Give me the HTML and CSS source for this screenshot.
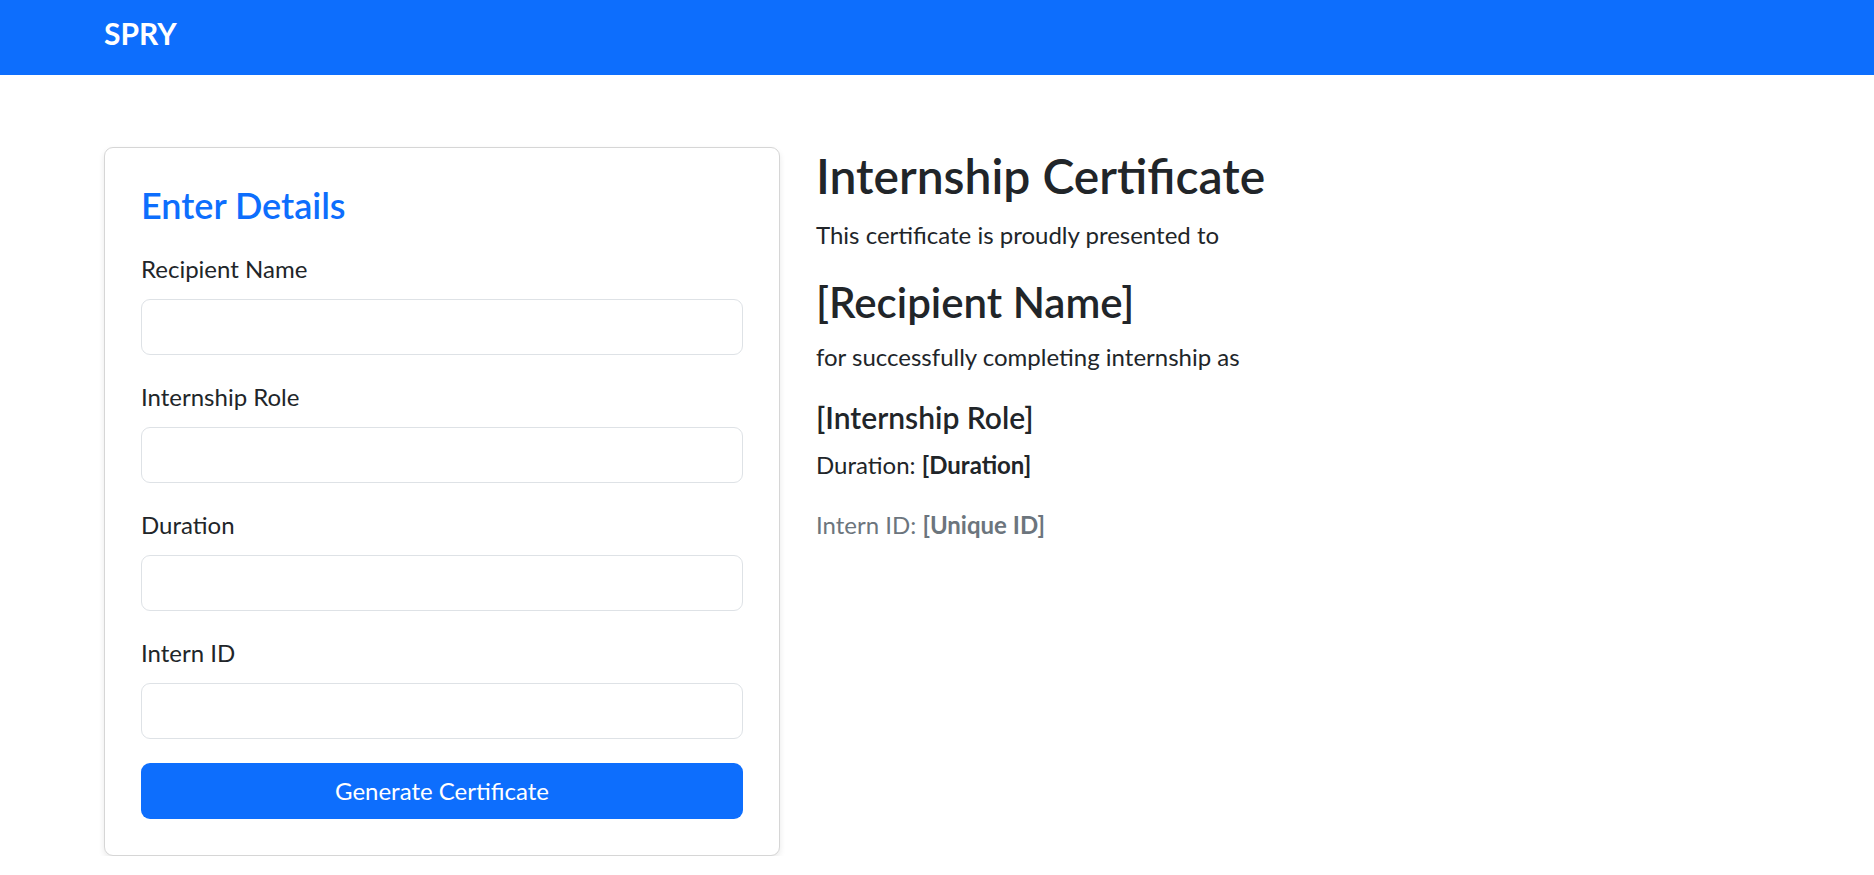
FILE: index.html
```html
<!DOCTYPE html>
<html lang="en">
<head>
<meta charset="utf-8">
<title>SPRY - Internship Certificate</title>
<link rel="stylesheet" href="styles.css">
</head>
<body>
<nav class="navbar">
  <span class="brand">SPRY</span>
</nav>
<main class="container">
  <section class="card">
    <h4 class="card-title">Enter Details</h4>
    <div class="field">
      <label class="form-label" for="name">Recipient Name</label>
      <input class="form-control" id="name" type="text">
    </div>
    <div class="field">
      <label class="form-label" for="role">Internship Role</label>
      <input class="form-control" id="role" type="text">
    </div>
    <div class="field">
      <label class="form-label" for="duration">Duration</label>
      <input class="form-control" id="duration" type="text">
    </div>
    <div class="field">
      <label class="form-label" for="iid">Intern ID</label>
      <input class="form-control" id="iid" type="text">
    </div>
    <button class="btn" type="button">Generate Certificate</button>
  </section>
  <section class="preview">
    <h2 class="cert-title">Internship Certificate</h2>
    <p class="text">This certificate is proudly presented to</p>
    <h3 class="recipient">[Recipient Name]</h3>
    <p class="text">for successfully completing internship as</p>
    <h5 class="role">[Internship Role]</h5>
    <p class="text">Duration: <strong>[Duration]</strong></p>
    <p class="text muted">Intern ID: <strong>[Unique ID]</strong></p>
  </section>
</main>
</body>
</html>
```
FILE: styles.css
```css
* { box-sizing: border-box; }

body {
  margin: 0;
  font-family: Lato, "Open Sans", sans-serif;
  font-size: 24px;
  line-height: 1.5;
  color: #212529;
  background: #fff;
}

.navbar {
  height: 75px;
  background: #0d6efd;
  display: flex;
  align-items: flex-start;
  padding: 11px 0 0 104px;
}

.brand {
  color: #fff;
  font-weight: 700;
  font-size: 30px;
  line-height: 45px;
}

.container {
  display: flex;
  align-items: flex-start;
  gap: 36px;
  padding: 72px 104px 0 104px;
}

.card {
  width: 676px;
  flex: 0 0 676px;
  border: 1px solid #d6d6d6;
  border-radius: 9px;
  box-shadow: 0 3px 6px rgba(0, 0, 0, 0.09);
  padding: 36px;
  background: #fff;
}

.card-title {
  margin: 0 0 24px;
  font-size: 36px;
  font-weight: 600;
  line-height: 1.2;
  color: #0d6efd;
}

.field {
  margin-bottom: 24px;
}

.form-label {
  display: block;
  margin-bottom: 12px;
  line-height: 36px;
}

.form-control {
  display: block;
  width: 100%;
  height: 56px;
  border: 1px solid #dee2e6;
  border-radius: 9px;
  padding: 0 18px;
  font: inherit;
  background: #fff;
}

.btn {
  display: flex;
  align-items: center;
  justify-content: center;
  width: 100%;
  height: 56px;
  border: 0;
  border-radius: 9px;
  background: #0d6efd;
  color: #fff;
  font: inherit;
  line-height: 36px;
}

.preview {
  flex: 1;
}

.cert-title {
  margin: 0 0 12px;
  font-size: 48px;
  font-weight: 600;
  line-height: 1.2;
}

.recipient {
  margin: 0 0 12px;
  font-size: 42px;
  font-weight: 600;
  line-height: 1.2;
}

.role {
  margin: 0 0 12px;
  font-size: 30px;
  font-weight: 600;
  line-height: 1.2;
}

.text {
  margin: 0 0 24px;
}

.text strong {
  font-weight: 700;
}

.muted {
  color: #6c757d;
}
```
